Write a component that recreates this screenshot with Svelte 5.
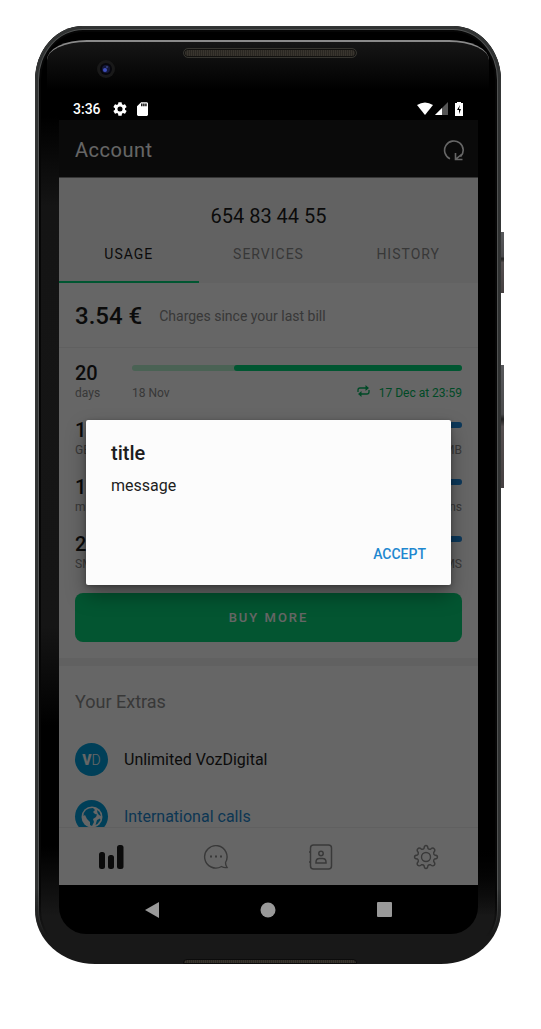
<script>
  const tabs = ['USAGE', 'SERVICES', 'HISTORY'];
  let active = $state('USAGE');
  let open = $state(true);

  const plans = [
    { amount: '20', unit: 'days', left: '18 Nov', right: '17 Dec at 23:59', renew: true, used: 31, tone: 'green' },
    { amount: '1', unit: 'GB', left: '', right: '500 MB', used: 31, tone: 'blue' },
    { amount: '1', unit: 'min', left: '', right: '100 mins', used: 31, tone: 'blue' },
    { amount: '2', unit: 'SMS', left: '', right: '20 SMS', used: 31, tone: 'blue' }
  ];
</script>

<div class="page">
  <div class="phone">
    <span class="side power"></span>
    <span class="side volume"></span>
    <div class="glass"></div>
    <svg class="camera" viewBox="0 0 18 18" aria-hidden="true">
      <circle cx="9" cy="9" r="9" fill="#191919" />
      <circle cx="9" cy="9" r="6" fill="#07070d" />
      <circle cx="9" cy="9" r="4" fill="#15183a" />
      <circle cx="8" cy="10" r="2" fill="#3f50bd" />
      <circle cx="10" cy="7" r="1" fill="#39437e" />
    </svg>
    <div class="speaker"></div>
    <div class="speaker bottom"></div>

    <div class="screen">
      <div class="status">
        <span class="clock">3:36</span>
        <svg width="14" height="14" viewBox="2 2 20 20" aria-hidden="true">
          <path fill="#fff" d="M19.14 12.94c.04-.3.06-.61.06-.94s-.02-.64-.07-.94l2.03-1.58a.5.5 0 0 0 .12-.61l-1.92-3.32a.49.49 0 0 0-.59-.22l-2.39.96a7 7 0 0 0-1.62-.94l-.36-2.54a.48.48 0 0 0-.48-.41h-3.84a.48.48 0 0 0-.47.41l-.36 2.54c-.59.24-1.13.57-1.62.94l-2.39-.96a.48.48 0 0 0-.59.22L2.74 8.87a.47.47 0 0 0 .12.61l2.03 1.58a6 6 0 0 0 0 1.88l-2.03 1.58a.5.5 0 0 0-.12.61l1.92 3.32c.12.22.37.29.59.22l2.39-.96c.5.38 1.03.7 1.62.94l.36 2.54c.05.24.24.41.48.41h3.84c.24 0 .44-.17.47-.41l.36-2.54c.59-.24 1.13-.56 1.62-.94l2.39.96c.22.08.47 0 .59-.22l1.92-3.32a.47.47 0 0 0-.12-.61zM12 15.6a3.6 3.6 0 1 1 0-7.2 3.6 3.6 0 0 1 0 7.2" />
        </svg>
        <svg class="card" width="11" height="14" viewBox="4 2 16 20" aria-hidden="true">
          <path fill="#fff" d="M18 2h-8L4 8v12c0 1.100.9 2 2 2h12c1.100 0 2-.9 2-2V4c0-1.100-.9-2-2-2zm-6 6h-2V4h2zm3 0h-2V4h2zm3 0h-2V4h2z" />
        </svg>
        <span class="grow"></span>
        <svg width="16" height="13" viewBox="0 0 16 13" aria-hidden="true">
          <path fill="#fff" d="M0 3Q8-2 16 3L8 13Z" />
        </svg>
        <svg class="signal" width="13" height="13" viewBox="0 0 13 13" aria-hidden="true">
          <path fill="#555" d="M13 0V13H0Z" />
          <path fill="#fff" d="M7 6V13H0Z" />
        </svg>
        <svg class="battery" width="8" height="14" viewBox="0 0 8 14" aria-hidden="true">
          <path fill="#fff" d="M2 0H6V1H8V14H0V1H2Z" />
          <path fill="#000" d="M5 3L2 8H4V12L6 7H4Z" />
        </svg>
      </div>

      <div class="app">
        <header>
          <h1>Account</h1>
          <button class="icon" aria-label="Refresh">
            <svg width="22" height="22" viewBox="0 0 22 22" fill="none" stroke="#fff" stroke-width="1.600">
              <path d="M7 19.700A9.300 9.300 0 1 1 17.500 17.800" />
              <path d="M12.500 14V20.500H19.500M12.800 20.200L18.500 15.500" />
            </svg>
          </button>
        </header>

        <main>
          <section class="top">
            <p class="number">654 83 44 55</p>
            <nav class="tabs">
              {#each tabs as tab}
                <button class:active={active === tab} onclick={() => (active = tab)}>{tab}</button>
              {/each}
            </nav>
          </section>

          <section class="bill">
            <strong>3.54 €</strong>
            <span>Charges since your last bill</span>
          </section>

          <section class="plans">
            {#each plans as plan}
              <div class="plan {plan.tone}">
                <div class="amount">
                  <strong>{plan.amount}</strong>
                  <span>{plan.unit}</span>
                </div>
                <div class="meter">
                  <div class="track"><div class="fill" style="width: {100 - plan.used}%"></div></div>
                  <div class="labels">
                    <span>{plan.left}</span>
                    <span class="end">
                      {#if plan.renew}
                        <svg width="13" height="12" viewBox="0 0 13 12" fill="none" stroke="currentColor" stroke-width="1.300" aria-hidden="true">
                          <path d="M1 7V5Q1 3 3 3H10M12 5V7Q12 9 10 9H3" />
                          <path fill="currentColor" stroke="none" d="M8.500 0L12 3L8.500 6ZM4.500 6L1 9L4.500 12Z" />
                        </svg>
                      {/if}
                      {plan.right}
                    </span>
                  </div>
                </div>
              </div>
            {/each}
            <button class="buy">BUY MORE</button>
          </section>

          <section class="extras">
            <h2>Your Extras</h2>
            <div class="extra">
              <span class="badge"><b>V</b>D</span>
              <span>Unlimited VozDigital</span>
            </div>
            <div class="extra">
              <span class="badge">
                <svg width="22" height="22" viewBox="0 0 22 22" aria-hidden="true">
                  <circle cx="11" cy="11" r="10.500" fill="#fff" />
                  <path fill="#009fdc" d="M5 4L8 2.500L12 2L14 4L12 6L14 8L16 8.500L15 11L12 13L13 16L11 20L9 19L9 16L6 13L4 9L2.500 10Q2.500 6 5 4ZM16 4L18.500 6L20 10L18 9L16.500 7ZM16 14L19 12.500L19.500 14L16.500 18L14.500 19Z" />
                </svg>
              </span>
              <a href="#calls">International calls</a>
            </div>
          </section>
        </main>

        <nav class="bar">
          <button aria-label="Usage">
            <svg width="26" height="24" viewBox="0 0 26 24" fill="#1d1d1d">
              <rect x="1" y="7" width="6" height="17" rx="2.500" />
              <rect x="10" y="10" width="6" height="14" rx="2.500" />
              <rect x="19" y="0" width="6.500" height="24" rx="2.500" />
            </svg>
          </button>
          <button aria-label="Messages">
            <svg width="26" height="26" viewBox="0 0 26 26" fill="none" stroke="#8e8e8e" stroke-width="1.400">
              <path d="M22.500 18.500A11.200 11.200 0 1 0 18.500 22.500Q21 24 24 23.500Q22.500 21.500 22.500 18.500" />
              <path d="M7 12.500H9M12 12.500H14M17 12.500H19" stroke-width="2" />
            </svg>
          </button>
          <button aria-label="Contacts">
            <svg width="26" height="26" viewBox="0 0 26 26" fill="none" stroke="#8e8e8e" stroke-width="1.500">
              <rect x="2.500" y="1" width="21" height="24" rx="3" />
              <path d="M1 8H3M1 18H3" />
              <circle cx="13" cy="9.500" r="2.200" />
              <path d="M8 19V18Q8 14.500 11.500 14.500H14.500Q18 14.500 18 18V19Z" />
            </svg>
          </button>
          <button aria-label="Settings">
            <svg width="26" height="26" viewBox="0 0 26 26" fill="none" stroke="#8e8e8e" stroke-width="1.400" stroke-linejoin="round">
              <circle cx="13" cy="13" r="4.500" />
              <path d="M11 4.500Q11.200 1.500 13 1.500Q14.800 1.500 15 4.500Q15.800 5.500 17.500 5.200Q19.800 3.200 21.200 4.700Q22.700 6.200 20.700 8.500Q20.500 10.300 21.500 11Q24.500 11.200 24.500 13Q24.500 14.800 21.500 15Q20.400 15.800 20.700 17.500Q22.700 19.800 21.200 21.300Q19.800 22.700 17.500 20.800Q15.800 20.400 15 21.500Q14.800 24.500 13 24.500Q11.200 24.500 11 21.500Q10.200 20.400 8.500 20.800Q6.200 22.700 4.800 21.300Q3.300 19.800 5.300 17.500Q5.600 15.800 4.500 15Q1.500 14.800 1.500 13Q1.500 11.200 4.500 11Q5.500 10.300 5.300 8.500Q3.300 6.200 4.800 4.700Q6.200 3.200 8.500 5.200Q10.200 5.500 11 4.500Z" />
            </svg>
          </button>
        </nav>

        {#if open}
          <div class="scrim">
            <div class="dialog" role="dialog" aria-modal="true" aria-labelledby="dialog-title">
              <h3 id="dialog-title">title</h3>
              <p>message</p>
              <button onclick={() => (open = false)}>ACCEPT</button>
            </div>
          </div>
        {/if}
      </div>

      <div class="system">
        <button aria-label="Back">
          <svg width="16" height="18" viewBox="0 0 16 18"><path fill="#999" d="M15 1V17L1 9Z" /></svg>
        </button>
        <button aria-label="Home">
          <svg width="16" height="16" viewBox="0 0 16 16"><circle cx="8" cy="8" r="7.500" fill="#999" /></svg>
        </button>
        <button aria-label="Recent apps">
          <svg width="16" height="16" viewBox="0 0 16 16"><rect width="15" height="15" x="0" y="0" rx="1" fill="#999" /></svg>
        </button>
      </div>
    </div>
  </div>
</div>

<style>
  :global(body) {
    background: #fff;
  }
  * {
    box-sizing: border-box;
  }
  .page {
    display: flex;
    height: 100vh;
    padding: 26px 40px 65px 35px;
    font-family: Roboto, 'Liberation Sans', sans-serif;
    color: #1d1d1d;
  }
  h1, h2, h3, p {
    margin: 0;
    font-weight: 400;
  }
  button {
    border: 0;
    padding: 0;
    background: none;
    font: inherit;
    color: inherit;
    cursor: pointer;
  }
  svg {
    display: block;
  }
  .phone {
    position: relative;
    flex: 1;
    display: flex;
    min-width: 0;
    padding: 70px 23px 30px 24px;
    border-radius: 48px 48px 60px 60px / 54px 54px 54px 54px;
    background:
      linear-gradient(#000 0 820px, transparent 890px) right / 50% 100% no-repeat,
      linear-gradient(#000 0, #000 90px, #141414 180px, #151515 600px, #000 700px, #000 820px, #181818 890px);
  }
  /* Metal rim, fading out towards the foot of the case */
  .phone::before {
    content: '';
    position: absolute;
    inset: 0;
    border-radius: inherit;
    box-shadow: inset 0 0 0 1px #343636, inset 0 0 0 3px #303232, inset 0 0 0 4px #505252, inset 0 0 0 6px #060606;
    mask-image: linear-gradient(#000 92%, transparent 97%);
  }
  .side {
    position: absolute;
    right: -3px;
    width: 3px;
    background: linear-gradient(#58595c 0, #4b4b4d 40%, #202020 44%, #554f50 50%, #454041 100%);
  }
  .power {
    top: 206px;
    height: 61px;
  }
  .volume {
    top: 339px;
    height: 123px;
  }
  .glass {
    position: absolute;
    inset: 14px 12px auto 12px;
    height: 50px;
    border-top: 2px solid #8a8a8a;
    border-radius: 40px 40px 0 0 / 20px 20px 0 0;
    background: linear-gradient(#161616, #000);
  }
  .camera {
    position: absolute;
    left: 62px;
    top: 34px;
    width: 18px;
    height: 18px;
  }
  .speaker {
    position: absolute;
    left: 148px;
    right: 144px;
    top: 22px;
    height: 10px;
    border: 1px solid #363530;
    border-radius: 5px;
    background: repeating-linear-gradient(90deg, #2a2722 0 1px, #39352e 1px 2px);
    box-shadow: inset 0 0 0 1px #12110f;
  }
  .speaker.bottom {
    top: auto;
    bottom: 0;
    height: 5px;
    border-color: #0c0c0c;
    border-radius: 4px 4px 0 0;
    box-shadow: none;
  }
  .screen {
    flex: 1;
    position: relative;
    display: flex;
    flex-direction: column;
    min-width: 0;
    overflow: hidden;
    border-radius: 0 0 27px 27px;
    background: #000;
  }
  .status {
    display: flex;
    align-items: center;
    height: 24px;
    padding: 1px 15px 0 14px;
    color: #fff;
  }
  .clock {
    margin-right: 12px;
    font-size: 14px;
    font-weight: 500;
  }
  .card {
    margin-left: 10px;
  }
  .grow {
    flex: 1;
  }
  .signal {
    margin-left: 2px;
  }
  .battery {
    margin-left: 7px;
  }
  .app {
    position: relative;
    flex: 1;
    display: flex;
    flex-direction: column;
    min-height: 0;
    background: #fff;
  }
  header {
    display: flex;
    align-items: center;
    justify-content: space-between;
    height: 58px;
    padding: 2px 13px 0 16px;
    background: #191919;
    border-bottom: 1px solid #888;
    color: #fff;
  }
  h1 {
    font-size: 20px;
    line-height: 24px;
    letter-spacing: 0.5px;
  }
  main {
    flex: 1;
    min-height: 0;
    overflow: hidden;
  }
  .top {
    padding-top: 26px;
    background: #f6f6f6;
  }
  .number {
    font-size: 20px;
    line-height: 24px;
    text-align: center;
  }
  .tabs {
    display: flex;
  }
  .tabs button {
    flex: 1;
    height: 55px;
    padding-bottom: 2px;
    border-bottom: 2px solid transparent;
    font-size: 14px;
    letter-spacing: 1px;
    color: #8c8c8c;
  }
  .tabs button.active {
    color: #1d1d1d;
    border-color: #00d87a;
  }
  .bill {
    display: flex;
    align-items: center;
    gap: 17px;
    height: 65px;
    padding: 1px 16px 0;
    border-bottom: 1px solid #f1f1f1;
    font-size: 14px;
    color: #8c8c8c;
  }
  .bill strong {
    font-size: 24px;
    font-weight: 500;
    color: #1d1d1d;
  }
  .plans {
    padding: 13px 16px 16px;
    border-bottom: 8px solid #f2f2f2;
  }
  .plan {
    display: flex;
    height: 57px;
  }
  .amount {
    width: 57px;
    display: flex;
    flex-direction: column;
    font-size: 12px;
    line-height: 16px;
    color: #8c8c8c;
  }
  .amount strong {
    font-size: 20px;
    line-height: 24px;
    font-weight: 500;
    color: #1d1d1d;
  }
  .meter {
    flex: 1;
    padding-top: 4px;
  }
  .track {
    height: 6px;
    border-radius: 3px;
    background: #b8f5d2;
  }
  .blue .track {
    background: #bfdff8;
  }
  .fill {
    height: 6px;
    margin-left: auto;
    border-radius: 3px;
    background: #00d87a;
  }
  .blue .fill {
    background: #1f8ce0;
  }
  .labels {
    display: flex;
    justify-content: space-between;
    padding-top: 14px;
    font-size: 12px;
    line-height: 16px;
    color: #8c8c8c;
  }
  .end {
    display: flex;
    gap: 9px;
  }
  .green .end {
    color: #00b860;
  }
  .buy {
    width: 100%;
    height: 49px;
    margin-top: 4px;
    padding-bottom: 1px;
    border-radius: 8px;
    background: #08d47a;
    color: #fff;
    font-size: 13px;
    font-weight: 500;
    letter-spacing: 2px;
  }
  .extras {
    padding: 24px 16px;
  }
  h2 {
    margin-bottom: 17px;
    font-size: 18px;
    line-height: 24px;
    color: #8c8c8c;
  }
  .extra {
    display: flex;
    align-items: center;
    gap: 16px;
    height: 57px;
    font-size: 16px;
  }
  .badge {
    display: flex;
    align-items: center;
    justify-content: center;
    width: 33px;
    height: 33px;
    border-radius: 50%;
    background: #009fdc;
    color: #fff;
    font-size: 14px;
    font-weight: 300;
  }
  .badge b {
    font-weight: 900;
  }
  a {
    color: #1e88d0;
    text-decoration: none;
  }
  .bar {
    display: flex;
    height: 58px;
    border-top: 1px solid #f1f1f1;
  }
  .bar button {
    flex: 1;
    display: grid;
    place-items: center;
  }
  .scrim {
    position: absolute;
    inset: 0;
    display: flex;
    align-items: center;
    padding: 0 27px;
    background: rgba(0, 0, 0, 0.6);
  }
  .dialog {
    flex: 1;
    display: flex;
    flex-direction: column;
    min-height: 165px;
    padding: 21px 25px 19px;
    border-radius: 2px;
    background: #fcfcfc;
    box-shadow: 0 10px 20px rgba(0, 0, 0, 0.35), 0 1px 4px rgba(0, 0, 0, 0.3);
  }
  h3 {
    font-size: 20px;
    line-height: 24px;
    font-weight: 500;
  }
  .dialog p {
    margin-top: 9px;
    font-size: 16px;
    line-height: 24px;
  }
  .dialog button {
    margin-top: auto;
    align-self: flex-end;
    font-size: 14px;
    line-height: 24px;
    font-weight: 500;
    color: #1e88d0;
  }
  .system {
    display: flex;
    height: 49px;
    padding: 0 35px;
  }
  .system button {
    flex: 1;
    display: grid;
    place-items: center;
  }
</style>
